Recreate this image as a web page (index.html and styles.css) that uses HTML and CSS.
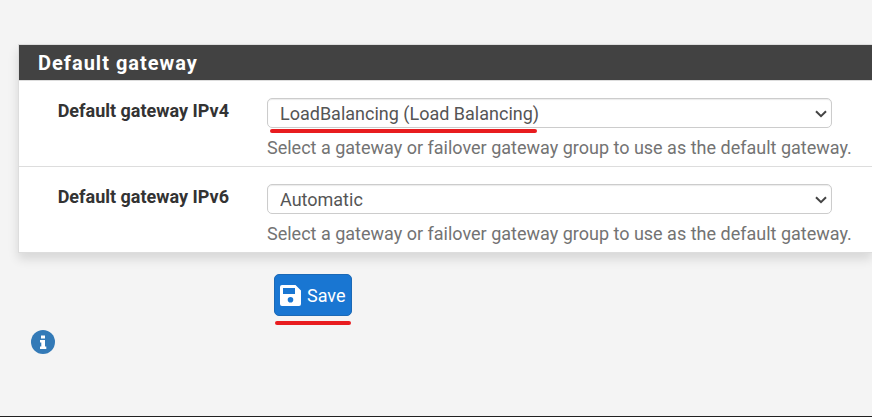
FILE: index.html
```html
<!DOCTYPE html>
<html lang="en">
<head>
    <meta charset="UTF-8">
    <meta name="viewport" content="width=device-width, initial-scale=1.0">
    <title>Default gateway</title>
    <link rel="stylesheet" href="styles.css">
</head>
<body>

    <form class="gateway-form">
        <div class="panel">
            <h2 class="panel-title">Default gateway</h2>
            <div class="form-group">
                <label for="defaultgw4">Default gateway IPv4</label>
                <div class="field">
                    <div class="select-wrap marked">
                        <select id="defaultgw4" name="defaultgw4">
                            <option selected>LoadBalancing (Load Balancing)</option>
                            <option>Automatic</option>
                        </select>
                        <svg class="chevron" viewBox="0 0 12 8" aria-hidden="true"><path d="M1 1.2 6 6.2 11 1.2"/></svg>
                    </div>
                    <p class="help">Select a gateway or failover gateway group to use as the default gateway.</p>
                </div>
            </div>
            <div class="form-group">
                <label for="defaultgw6">Default gateway IPv6</label>
                <div class="field">
                    <div class="select-wrap">
                        <select id="defaultgw6" name="defaultgw6">
                            <option selected>Automatic</option>
                        </select>
                        <svg class="chevron" viewBox="0 0 12 8" aria-hidden="true"><path d="M1 1.2 6 6.2 11 1.2"/></svg>
                    </div>
                    <p class="help">Select a gateway or failover gateway group to use as the default gateway.</p>
                </div>
            </div>
        </div>

        <div class="actions marked">
            <button type="submit" class="btn-save">
                <svg viewBox="0 0 21 21" aria-hidden="true">
                    <path fill-rule="evenodd" d="M2 0H15.500L21 5.500V19A2 2 0 0 1 19 21H2A2 2 0 0 1 0 19V2A2 2 0 0 1 2 0ZM3 3V9H15V3ZM10.500 12A2.800 2.800 0 1 0 10.500 17.600A2.800 2.800 0 1 0 10.500 12Z"/>
                </svg>
                Save
            </button>
        </div>
    </form>

    <a class="info" href="#info" aria-label="Information">
        <svg viewBox="0 0 24 24" aria-hidden="true">
            <circle cx="12" cy="12" r="12"/>
            <path d="M10 5.500H14V8.500H10ZM9 10H14V16.500H15.300V19H9V16.500H10.300V12.500H9Z"/>
        </svg>
    </a>

</body>
</html>
```
FILE: styles.css
```css
* {
    box-sizing: border-box;
}

body {
    font-family: Roboto, Arial, sans-serif;
    font-size: 18px;
    line-height: 26px;
    background-color: #f4f4f4;
    color: #333;
    margin: 0;
    padding: 44px 0 0 18px;
    min-height: 100vh;
    border-bottom: 1px solid #212121;
}

.panel {
    background-color: #fff;
    border: 1px solid #ddd;
    border-right: none;
    box-shadow: 0 6px 10px rgba(0, 0, 0, 0.12);
}

.panel-title {
    margin: 0;
    padding: 5px 19px 4px;
    background-color: #424242;
    color: #fff;
    font-size: 20px;
    font-weight: 700;
    letter-spacing: 1px;
}

.form-group {
    display: grid;
    grid-template-columns: 210px 1fr;
    column-gap: 38px;
    padding: 17px 40px 5px 0;
    border-top: 1px solid #ddd;
}

.form-group label {
    font-weight: 700;
    text-align: right;
}

.field {
    min-width: 0;
}

.select-wrap,
.actions {
    position: relative;
}

.select-wrap select {
    display: block;
    appearance: none;
    width: 100%;
    height: 30px;
    padding: 0 30px 0 12px;
    border: 1px solid #ccc;
    border-radius: 5px;
    background-color: #fff;
    box-shadow: inset 0 1px 1px rgba(0, 0, 0, 0.08);
    color: #555;
    font-family: inherit;
    font-size: 18px;
}

.chevron {
    position: absolute;
    right: 5px;
    top: 12px;
    width: 12px;
    height: 8px;
    fill: none;
    stroke: #444;
    stroke-width: 2;
    pointer-events: none;
}

/* red highlight under a control */
.marked::after {
    content: "";
    position: absolute;
    left: 3px;
    top: 31px;
    width: 267px;
    height: 4px;
    border-radius: 2px;
    background-color: #e81c1f;
}

.help {
    margin: 7px 0 0;
    color: #737373;
    white-space: nowrap;
}

.actions {
    width: max-content;
    margin: 21px 0 0 256px;
}

.actions.marked::after {
    left: 1px;
    top: 47px;
    width: 76px;
}

.btn-save {
    display: flex;
    align-items: center;
    gap: 6px;
    height: 42px;
    padding: 0 5px;
    border: 1px solid #1b69b6;
    border-radius: 5px;
    background-color: #1976d2;
    color: #fff;
    font-family: inherit;
    font-size: 18px;
    cursor: pointer;
}

.btn-save:hover {
    background-color: #1565c0;
}

.btn-save svg {
    width: 21px;
    height: 21px;
    fill: #fff;
}

.info {
    display: block;
    width: 24px;
    margin: 14px 0 0 13px;
}

.info svg {
    display: block;
    width: 24px;
    height: 24px;
    fill: #337ab7;
}

.info path {
    fill: #fff;
}
```
